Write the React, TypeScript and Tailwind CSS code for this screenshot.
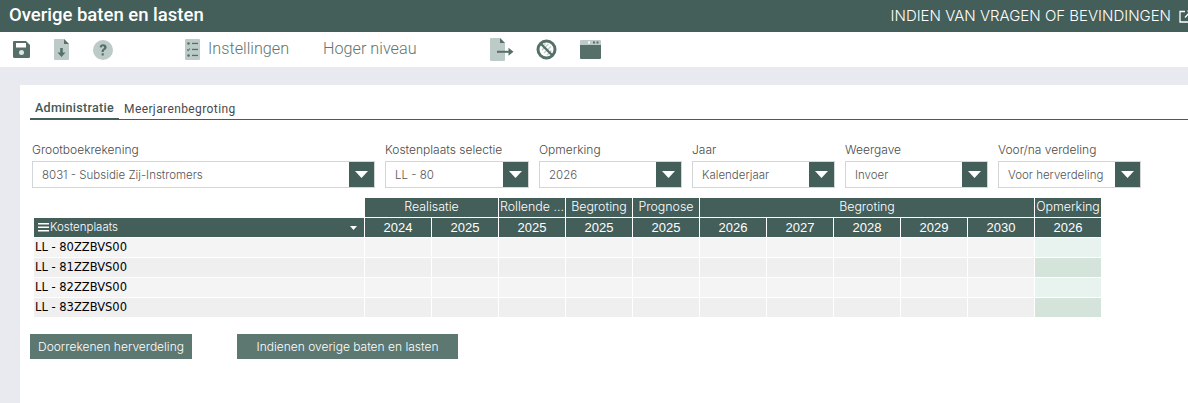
import React from "react";

const DARK = "#567069";
const LIGHT = "#bccbc7";

function SaveIcon() {
  return (
    <svg width="19" height="19" viewBox="0 0 19 19" className="shrink-0">
      <path d="M2 1h12l4 4v11.5a1.5 1.5 0 0 1-1.5 1.5h-14A1.5 1.5 0 0 1 1 16.500V2a1 1 0 0 1 1-1z" fill={DARK} />
      <rect x="4" y="3" width="10" height="4.500" fill="#ffffff" />
      <circle cx="9.500" cy="12.500" r="2.500" fill="#dfe6e4" />
    </svg>
  );
}
function FileDownIcon() {
  return (
    <svg width="15" height="21" viewBox="0 0 15 21" className="shrink-0">
      <path d="M1 0h9l5 5v15a1 1 0 0 1-1 1H1a1 1 0 0 1-1-1V1a1 1 0 0 1 1-1z" fill={LIGHT} />
      <path d="M10 0l5 5h-5z" fill={DARK} />
      <path d="M6.200 9h2.600v4.500h2.700L7.500 18l-4-4.500h2.700z" fill={DARK} />
    </svg>
  );
}
function HelpIcon() {
  return (
    <svg width="20" height="20" viewBox="0 0 20 20" className="shrink-0">
      <circle cx="10" cy="10" r="10" fill={LIGHT} />
      <path d="M6.600 7.300C6.800 5.300 8.200 4.300 10.100 4.300c2 0 3.500 1.100 3.500 2.900 0 1.500-.9 2.200-1.800 2.800-.7.500-1 .8-1 1.600v.4H8.600v-.6c0-1.300.5-1.900 1.300-2.500.7-.5 1.200-.9 1.200-1.600 0-.7-.5-1.100-1.100-1.100-.7 0-1.100.4-1.200 1.300z" fill={DARK} />
      <rect x="8.600" y="13.300" width="2.200" height="2.300" rx=".4" fill={DARK} />
    </svg>
  );
}
function ChecklistIcon() {
  return (
    <svg width="15" height="21" viewBox="0 0 15 21" className="shrink-0">
      <rect width="15" height="21" rx="1" fill={LIGHT} />
      <circle cx="3.500" cy="4.500" r="1.300" fill={DARK} />
      <rect x="7" y="3.800" width="6" height="1.300" fill={DARK} />
      <path d="M2.200 10.500l1 1 1.800-2" stroke={DARK} strokeWidth="1.100" fill="none" />
      <rect x="7" y="9.800" width="6" height="1.300" fill={DARK} />
      <circle cx="3.500" cy="16.500" r="1.300" fill={DARK} />
      <rect x="7" y="15.800" width="6" height="1.300" fill={DARK} />
    </svg>
  );
}
function ExportIcon() {
  return (
    <svg width="24" height="23" viewBox="0 0 24 23" className="shrink-0">
      <path d="M1 0h9l5 5v17a1 1 0 0 1-1 1H1a1 1 0 0 1-1-1V1a1 1 0 0 1 1-1z" fill={LIGHT} />
      <path d="M10 0l5 5h-5z" fill={DARK} />
      <path d="M7 12.800h12.500v2H7z" fill={DARK} />
      <path d="M18.500 9.800l5 4-5 4z" fill={DARK} />
    </svg>
  );
}
function BanIcon() {
  return (
    <svg width="21" height="21" viewBox="0 0 21 21" className="shrink-0">
      <circle cx="10.500" cy="10.500" r="8.500" fill="#ffffff" stroke={DARK} strokeWidth="3" />
      <path d="M6.500 7l3-2.500M6 11l6.500-6M8 14l7-6.500M11 16l4.500-4.500" stroke={LIGHT} strokeWidth="1.200" />
      <path d="M4.500 4.500l12 12" stroke={DARK} strokeWidth="2.400" />
    </svg>
  );
}
function WindowIcon() {
  return (
    <svg width="21" height="19" viewBox="0 0 21 19" className="shrink-0">
      <path d="M1 0h19a1 1 0 0 1 1 1v4H0V1a1 1 0 0 1 1-1z" fill={LIGHT} />
      <path d="M0 5h21v13a1 1 0 0 1-1 1H1a1 1 0 0 1-1-1z" fill={DARK} />
      <rect x="8" y="1.500" width="2" height="2" fill="#ffffff" />
      <rect x="13" y="1.500" width="2" height="2" fill={DARK} />
      <rect x="16.500" y="1.500" width="2" height="2" fill={DARK} />
    </svg>
  );
}

function Field({ label, value, width }: { label: string; value: string; width: string }) {
  return (
    <div className={width}>
      <div className="h-[24px] text-[12px] leading-[26px] font-light whitespace-nowrap text-[#4a4a4a] [font-family:Inter,sans-serif]">
        {label}
      </div>
      <div className="flex h-[27px] border border-[#d3d6d9] bg-white">
        <div className="flex-1 overflow-hidden pl-[9px] text-[11.5px] leading-[26px] font-light whitespace-nowrap text-[#555] [font-family:Inter,sans-serif]">
          {value}
        </div>
        <div className="flex w-[25px] shrink-0 items-center justify-center bg-[#445e5a]">
          <svg width="13" height="7" viewBox="0 0 13 7">
            <path d="M0 0h13L6.500 7z" fill="#ffffff" />
          </svg>
        </div>
      </div>
    </div>
  );
}

const groupCell = "flex items-center justify-center overflow-hidden whitespace-nowrap bg-[#445e5a] text-[12.4px] text-white [font-family:Inter,sans-serif] font-light";
const yearCell = "flex items-center justify-center bg-[#445e5a] text-[13px] text-white [font-family:'Liberation_Sans',sans-serif]";

const years = ["2024", "2025", "2025", "2025", "2025", "2026", "2027", "2028", "2029", "2030", "2026"];
const rows = ["LL - 80ZZBVS00", "LL - 81ZZBVS00", "LL - 82ZZBVS00", "LL - 83ZZBVS00"];

export default function App() {
  return (
    <div className="flex h-[403px] w-full flex-col overflow-hidden bg-[#e9eaf0] [font-family:Roboto,sans-serif]">
      <header className="flex h-[32px] shrink-0 items-center justify-between bg-[#445e5a] pl-[9px] text-white">
        <div className="text-[18.5px] font-medium whitespace-nowrap">Overige baten en lasten</div>
        <div className="mr-[-4px] flex items-center gap-[8px] text-[15px] font-light whitespace-nowrap [font-family:Inter,sans-serif]">
          <span>INDIEN VAN VRAGEN OF BEVINDINGEN</span>
          <svg width="13" height="13" viewBox="0 0 13 13" fill="none" stroke="#ffffff" strokeWidth="1.300">
            <path d="M6 1.500H1v10.500h10.500V7M6 7.500L12 1M8.500 1H12v3.500" />
          </svg>
        </div>
      </header>

      <div className="flex h-[35px] shrink-0 items-center bg-white pl-[12px] text-[16.2px] font-light text-[#5f7671]">
        <SaveIcon />
        <div className="ml-[23px]"><FileDownIcon /></div>
        <div className="ml-[24px]"><HelpIcon /></div>
        <div className="ml-[72px]"><ChecklistIcon /></div>
        <span className="ml-[8px]">Instellingen</span>
        <span className="ml-[34px]">Hoger niveau</span>
        <div className="ml-[73px]"><ExportIcon /></div>
        <div className="ml-[22px]"><BanIcon /></div>
        <div className="ml-[23px]"><WindowIcon /></div>
      </div>

      <main className="mt-[18px] ml-[20px] flex-1 bg-white pt-[14px] pl-[10px]">
        <div className="flex h-[21px] border-b border-[#445e5a]">
          <div className="flex h-[21px] w-[89px] items-center justify-center border-b-2 border-[#445e5a] text-[12.5px] font-medium tracking-[0.3px] text-[#3f5a55]">
            Administratie
          </div>
          <div className="ml-[5px] flex h-[20px] items-center text-[12px] tracking-[0.4px] text-[#4a4a4a]">Meerjarenbegroting</div>
        </div>

        <div className="mt-[17px] ml-[2px] flex gap-[10px]">
          <Field width="w-[343px]" label="Grootboekrekening" value="8031 - Subsidie Zij-Instromers" />
          <Field width="w-[144px]" label="Kostenplaats selectie" value="LL - 80" />
          <Field width="w-[143px]" label="Opmerking" value="2026" />
          <Field width="w-[143px]" label="Jaar" value="Kalenderjaar" />
          <Field width="w-[143px]" label="Weergave" value="Invoer" />
          <Field width="w-[143px]" label="Voor/na verdeling" value="Voor herverdeling" />
        </div>

        <div className="mt-[10px] ml-[4px] grid w-max auto-rows-[19px] grid-cols-[330px_repeat(11,66px)] gap-[1px]">
          <div />
          <div className={`${groupCell} col-span-2`}>Realisatie</div>
          <div className={groupCell}>Rollende ...</div>
          <div className={groupCell}>Begroting</div>
          <div className={groupCell}>Prognose</div>
          <div className={`${groupCell} col-span-5`}>Begroting</div>
          <div className={groupCell}>Opmerking</div>

          <div className="flex items-center bg-[#445e5a] pr-[7px] pl-[4px] text-[11.5px] font-light text-white [font-family:Inter,sans-serif]">
            <svg width="11" height="9" viewBox="0 0 11 9" className="shrink-0">
              <path d="M0 0h11v1.500H0zM0 3.500h11V5H0zM0 7h11v1.500H0z" fill="#ffffff" />
            </svg>
            <span className="ml-px flex-1">Kostenplaats</span>
            <svg width="7" height="4" viewBox="0 0 7 4">
              <path d="M0 0h7L3.500 4z" fill="#ffffff" />
            </svg>
          </div>
          {years.map((y, i) => (
            <div key={i} className={yearCell}>{y}</div>
          ))}

          {rows.map((r, ri) => (
            <React.Fragment key={r}>
              <div className={`flex items-center pl-px text-[11.5px] text-black [font-family:'DejaVu_Sans',sans-serif] ${ri % 2 === 0 ? "bg-[#f4f4f4]" : "bg-[#efefef]"}`}>
                {r}
              </div>
              {years.map((_, i) => (
                <div
                  key={i}
                  className={
                    i === 10
                      ? ri % 2 === 0
                        ? "bg-[#e8f2ee]"
                        : "bg-[#d5e4db]"
                      : ri % 2 === 0
                        ? "bg-[#f4f4f4]"
                        : "bg-[#efefef]"
                  }
                />
              ))}
            </React.Fragment>
          ))}
        </div>

        <div className="mt-[17px] flex gap-[45px]">
          <button className="flex h-[25px] w-[162px] items-center justify-center bg-[#5c7871] text-[12px] font-light text-white [font-family:Inter,sans-serif]">
            Doorrekenen herverdeling
          </button>
          <button className="flex h-[25px] w-[221px] items-center justify-center bg-[#5c7871] text-[12px] font-light text-white [font-family:Inter,sans-serif]">
            Indienen overige baten en lasten
          </button>
        </div>
      </main>
    </div>
  );
}
